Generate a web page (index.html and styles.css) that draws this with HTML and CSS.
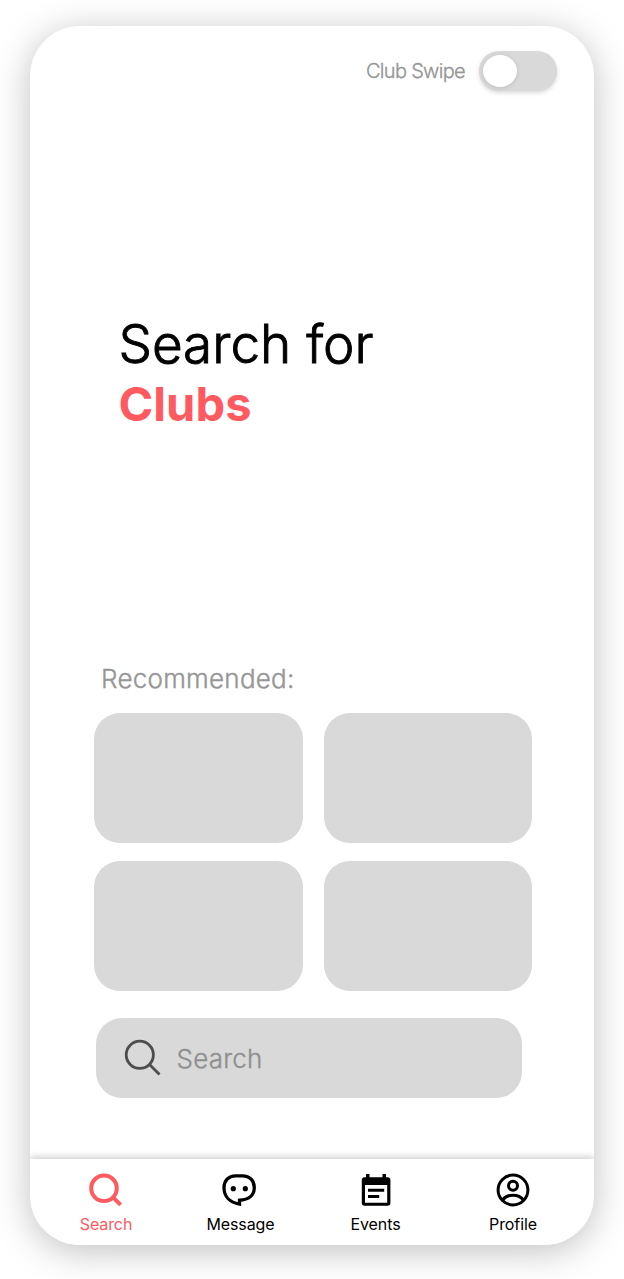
FILE: index.html
```html
<!DOCTYPE html>
<html lang="en">
<head>
<meta charset="utf-8">
<title>Search for Clubs</title>
<link rel="stylesheet" href="styles.css">
</head>
<body>
<div class="phone">
  <header class="topbar">
    <span class="topbar-label">Club Swipe</span>
    <span class="toggle"><span class="knob"></span></span>
  </header>
  <main class="content">
    <h1 class="title"><span class="title-main">Search for</span><span class="title-accent">Clubs</span></h1>
    <h2 class="recommended">Recommended:</h2>
    <div class="grid">
      <div class="tile"></div><div class="tile"></div>
      <div class="tile"></div><div class="tile"></div>
    </div>
    <div class="searchbar">
      <svg class="search-icon" width="38" height="38" viewBox="0 0 38 38" fill="none" stroke="#4d4d4d" stroke-width="2.8"><circle cx="15.8" cy="15.8" r="13.6"/><path d="M25.300 25.300 35.500 35.500"/></svg>
      <span class="placeholder">Search</span>
    </div>
  </main>
  <nav class="nav">
    <a class="nav-item active">
      <svg width="36" height="36" viewBox="0 0 36 36" fill="none" stroke="currentColor" stroke-width="4"><circle cx="16" cy="16.3" r="12.8"/><path d="M25 25.3 32.600 32.900"/></svg>
      <span class="nav-label">Search</span>
    </a>
    <a class="nav-item">
      <svg class="message-icon" width="36" height="36" viewBox="0 0 36 36"><path d="M14.500 3.800h7C29 3.800 33.300 9 33.300 15.700c0 7.300-5.300 12-14.800 12.500v3.800C9 30.500 3 24.500 3 15.700 3 9 7.500 3.800 14.500 3.800Z" fill="none" stroke="currentColor" stroke-width="3.300"/><circle cx="12.300" cy="16.700" r="2.600"/><circle cx="24.300" cy="16.700" r="2.600"/></svg>
      <span class="nav-label">Message</span>
    </a>
    <a class="nav-item">
      <svg width="36" height="36" viewBox="0 0 36 36"><path fill-rule="evenodd" d="M8 2h3.500v3.200h13V2H28v3.200h1.500Q32.400 5.200 32.400 8v23q0 2.800-2.900 2.800h-23Q3.800 33.800 3.800 31V8q0-2.800 2.700-2.800H8ZM7 13v17.800h22.200V13Z"/><path d="M10 16.700h16.200v3.100H10Zm0 6.200h11.200V26H10Z"/></svg>
      <span class="nav-label">Events</span>
    </a>
    <a class="nav-item">
      <svg width="36" height="36" viewBox="0 0 36 36" fill="none" stroke="currentColor" stroke-width="3"><circle cx="18" cy="18" r="14.900"/><circle cx="18" cy="13.800" r="4.500"/><path d="M7.500 28C12.500 21.500 23.500 21.500 28.500 28"/></svg>
      <span class="nav-label">Profile</span>
    </a>
  </nav>
</div>
</body>
</html>
```
FILE: styles.css
```css
* { box-sizing: border-box; }
body {
  margin: 0;
  height: 1279px;
  padding: 26px 30px 34px;
  background: #fff;
  font-family: Inter, "Liberation Sans", sans-serif;
  overflow: hidden;
}
.phone {
  display: flex;
  flex-direction: column;
  width: 564px;
  height: 1219px;
  border-radius: 50px;
  overflow: hidden;
  background: #fff;
  box-shadow: 0 6px 36px rgba(0, 0, 0, .25);
}
.topbar {
  display: flex;
  justify-content: flex-end;
  align-items: center;
  height: 90px;
  padding-right: 37px;
  color: #949494;
}
.topbar-label { width: 113px; font-size: 20px; font-weight: 300; letter-spacing: -.7px; white-space: nowrap; -webkit-text-stroke: .3px currentColor; }
.toggle {
  display: flex;
  width: 78px;
  height: 40px;
  padding: 4px;
  border-radius: 20px;
  background: #d9d9d9;
  box-shadow: 0 2px 4px rgba(0, 0, 0, .15);
}
.knob { width: 34px; height: 32px; border-radius: 50%; background: #fff; box-shadow: 0 1px 5px rgba(0, 0, 0, .12); }
.content { flex: 1; padding: 197px 61px 0 64.4px; }
.title { display: flex; flex-direction: column; height: 319px; margin: 0; padding-left: 24px; white-space: nowrap; }
.title-main { height: 62px; line-height: 62px; font-size: 53px; font-weight: 300; color: #000; -webkit-text-stroke: .9px currentColor; }
.title-accent { height: 57px; line-height: 57px; font-size: 47px; font-weight: 700; letter-spacing: .1px; color: #ff5a5f; }
.recommended { height: 81px; margin: 0; padding: 30px 0 0 6.6px; font-size: 26px; line-height: 34px; font-weight: 300; letter-spacing: .25px; color: #969696; -webkit-text-stroke: .4px currentColor; }
.grid { display: grid; grid-template-columns: 208.5px 208.5px; grid-auto-rows: 130px; gap: 18px 21px; }
.tile { border-radius: 26px; background: #d9d9d9; }
.searchbar {
  display: flex;
  align-items: center;
  width: 426.5px;
  height: 80px;
  margin: 27.4px 0 0 1.2px;
  padding-left: 28px;
  border-radius: 26px;
  background: #d9d9d9;
}
.placeholder { margin-left: 15px; font-size: 26px; font-weight: 300; letter-spacing: .2px; color: #8e8e8e; -webkit-text-stroke: .3px currentColor; }
.nav {
  display: grid;
  grid-template-columns: 136px 133px 137px 138px;
  height: 86px;
  padding: 13px 0 0 8px;
  background: #fff;
  box-shadow: 0 -2px 7px rgba(0, 0, 0, .2);
}
.nav-item { display: flex; flex-direction: column; align-items: center; gap: 5px; color: #000; }
.nav-item.active { color: #ff5a5f; }
.nav-label { font-size: 16px; line-height: 22px; letter-spacing: -.1px; }
.message-icon { margin-left: -3px; }
```
